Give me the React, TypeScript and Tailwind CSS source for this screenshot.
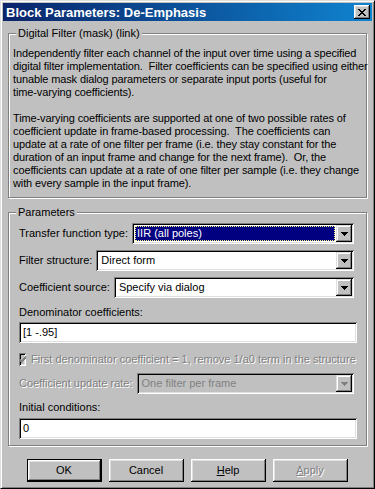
import React from "react";

const FONT = { fontFamily: '"Liberation Sans", Arial, sans-serif' };

function Arrow({ disabled }: { disabled?: boolean }) {
  return (
    <svg width="7" height="4" viewBox="0 0 7 4" className="block" shapeRendering="crispEdges">
      <path d="M0 0h7v1h-1v1h-1v1h-1v1h-1v-1h-1v-1h-1v-1h-1z" fill={disabled ? "#808080" : "#000"} />
    </svg>
  );
}

function DropBtn({ disabled }: { disabled?: boolean }) {
  return (
    <div className="w-[16px] h-full bg-[#c0c0c0] flex items-center justify-center shadow-[inset_-1px_-1px_0_#000,inset_1px_1px_0_#dfdfdf,inset_-2px_-2px_0_#808080,inset_2px_2px_0_#fff]">
      <Arrow disabled={disabled} />
    </div>
  );
}

function Combo({ value, selected, disabled }: { value: string; selected?: boolean; disabled?: boolean }) {
  return (
    <div
      className={`flex-1 h-[21px] p-[2px] flex shadow-[inset_1px_1px_0_#808080,inset_-1px_-1px_0_#fff,inset_2px_2px_0_#000,inset_-2px_-2px_0_#dfdfdf] ${
        disabled ? "bg-[#c0c0c0]" : "bg-white"
      }`}
    >
      <div className="flex-1 flex items-center p-[1px]">
        {selected ? (
          <div className="w-full h-full bg-[#000080] border border-dotted border-[#ffff7f] text-white flex items-center pl-[1px] leading-none">
            {value}
          </div>
        ) : (
          <div className={`pl-[2px] leading-none ${disabled ? "text-[#808080]" : "text-black"}`}>{value}</div>
        )}
      </div>
      <DropBtn disabled={disabled} />
    </div>
  );
}

function TextInput({ value }: { value: string }) {
  return (
    <div className="h-[21px] bg-white flex items-center pl-[4px] shadow-[inset_1px_1px_0_#808080,inset_-1px_-1px_0_#fff,inset_2px_2px_0_#000,inset_-2px_-2px_0_#dfdfdf]">
      <span className="leading-none">{value}</span>
    </div>
  );
}

function Group({ title, children, className }: { title: string; children: React.ReactNode; className?: string }) {
  return (
    <div className={`relative border border-[#808080] shadow-[inset_1px_1px_0_#fff,1px_1px_0_#fff] ${className ?? ""}`}>
      <span className="absolute left-[7px] top-[-7px] bg-[#c0c0c0] px-[2px] leading-[13px]">{title}</span>
      {children}
    </div>
  );
}

function Button({ children, isDefault, disabled }: { children: React.ReactNode; isDefault?: boolean; disabled?: boolean }) {
  const bevel = isDefault
    ? "border border-black shadow-[inset_-1px_-1px_0_#000,inset_1px_1px_0_#fff,inset_-2px_-2px_0_#808080,inset_2px_2px_0_#dfdfdf]"
    : "shadow-[inset_-1px_-1px_0_#000,inset_1px_1px_0_#fff,inset_-2px_-2px_0_#808080,inset_2px_2px_0_#dfdfdf]";
  return (
    <div
      className={`w-[75px] h-[23px] bg-[#c0c0c0] flex items-center justify-center ${bevel} ${
        disabled ? "text-[#808080] [text-shadow:1px_1px_0_#fff]" : "text-black"
      }`}
    >
      {children}
    </div>
  );
}

export default function App() {
  const p1 = [
    "Independently filter each channel of the input over time using a specified",
    "digital filter implementation.  Filter coefficients can be specified using either",
    "tunable mask dialog parameters or separate input ports (useful for",
    "time-varying coefficients).",
  ];
  const p2 = [
    "Time-varying coefficients are supported at one of two possible rates of",
    "coefficient update in frame-based processing.  The coefficients can",
    "update at a rate of one filter per frame (i.e. they stay constant for the",
    "duration of an input frame and change for the next frame).  Or, the",
    "coefficients can update at a rate of one filter per sample (i.e. they change",
    "with every sample in the input frame).",
  ];
  return (
    <div
      style={FONT}
      className="w-[375px] h-[489px] bg-[#c0c0c0] text-[11px] text-black border border-t-[#dfdfdf] border-l-[#dfdfdf] border-r-black border-b-black shadow-[inset_1px_1px_0_#fff,inset_-1px_-1px_0_#808080] p-[2px] flex flex-col"
    >
      {/* title bar */}
      <div className="h-[18px] bg-gradient-to-r from-[#0a246a] to-[#1084d0] flex items-center justify-between pl-[3px] pr-[2px]">
        <span className="text-white font-bold text-[13px] leading-none whitespace-nowrap">Block Parameters: De-Emphasis</span>
        <div className="w-[16px] h-[14px] bg-[#c0c0c0] flex items-center justify-center shadow-[inset_-1px_-1px_0_#000,inset_1px_1px_0_#fff,inset_-2px_-2px_0_#808080,inset_2px_2px_0_#dfdfdf]">
          <svg width="8" height="7" viewBox="0 0 8 7" shapeRendering="crispEdges">
            <path d="M0 0h2v1h1v1h2v-1h1v-1h2v1h-1v1h-1v1h-1v1h1v1h1v1h1v1h-2v-1h-1v-1h-2v1h-1v1h-2v-1h1v-1h1v-1h1v-1h-1v-1h-1v-1h-1z" fill="#000" />
          </svg>
        </div>
      </div>

      <div className="flex-1 flex flex-col px-[5px] pt-[12px]">
        <Group title="Digital Filter (mask) (link)" className="pt-[13px] pb-[7px] pl-[4px] pr-[2px]">
          <div className="leading-[13px] whitespace-nowrap tracking-[-0.12px]">
            {p1.map((l, i) => (
              <div key={i} className="whitespace-pre">{l}</div>
            ))}
            <div className="h-[13px]" />
            {p2.map((l, i) => (
              <div key={i} className="whitespace-pre">{l}</div>
            ))}
          </div>
        </Group>

        <Group title="Parameters" className="mt-[14px] pt-[10px] pl-[10px] pr-[12px] pb-[6px]">
          <div className="flex flex-col">
            <div className="flex items-center gap-[4px] h-[21px]">
              <span className="whitespace-nowrap">Transfer function type:</span>
              <Combo value="IIR (all poles)" selected />
            </div>
            <div className="flex items-center gap-[4px] h-[21px] mt-[6px]">
              <span className="whitespace-nowrap">Filter structure:</span>
              <Combo value="Direct form" />
            </div>
            <div className="flex items-center gap-[4px] h-[21px] mt-[6px]">
              <span className="whitespace-nowrap">Coefficient source:</span>
              <Combo value="Specify via dialog" />
            </div>
            <div className="mt-[8px] leading-[13px]">Denominator coefficients:</div>
            <div className="mt-[3px] -mr-[3px]">
              <TextInput value="[1 -.95]" />
            </div>
            <div className="mt-[10px] flex items-center gap-[5px] h-[13px]">
              <div className="w-[13px] h-[13px] bg-[#c0c0c0] flex items-center justify-center shadow-[inset_1px_1px_0_#808080,inset_-1px_-1px_0_#fff,inset_2px_2px_0_#000,inset_-2px_-2px_0_#dfdfdf]">
                <svg width="7" height="7" viewBox="0 0 7 7" shapeRendering="crispEdges">
                  <path
                    d="M6 0h1v3h-1v1h-1v1h-1v1h-1v1h-1v-1h-1v-1h-1v-3h1v1h1v1h1v-1h1v-1h1z"
                    fill="#808080"
                  />
                </svg>
              </div>
              <span className="text-[#808080] [text-shadow:1px_1px_0_#fff] whitespace-nowrap">
                First denominator coefficient = 1, remove 1/a0 term in the structure
              </span>
            </div>
            <div className="flex items-center gap-[4px] h-[19px] mt-[8px]">
              <span className="whitespace-nowrap text-[#808080] [text-shadow:1px_1px_0_#fff]">Coefficient update rate:</span>
              <Combo value="One filter per frame" disabled />
            </div>
            <div className="mt-[8px] leading-[13px]">Initial conditions:</div>
            <div className="mt-[4px] -mr-[3px]">
              <TextInput value="0" />
            </div>
          </div>
        </Group>

        <div className="flex justify-center gap-[7px] mt-[13px] pr-[1px]">
          <Button isDefault>OK</Button>
          <Button>Cancel</Button>
          <Button>
            <span>
              <span className="underline">H</span>elp
            </span>
          </Button>
          <Button disabled>
            <span>
              <span className="underline">A</span>pply
            </span>
          </Button>
        </div>
      </div>
    </div>
  );
}
